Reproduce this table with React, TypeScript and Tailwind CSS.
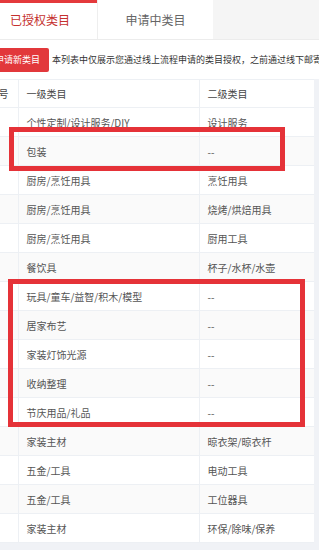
import React from "react";

const rows: [string, string][] = [
  ["个性定制/设计服务/DIY", "设计服务"],
  ["包装", "--"],
  ["厨房/烹饪用具", "烹饪用具"],
  ["厨房/烹饪用具", "烧烤/烘焙用具"],
  ["厨房/烹饪用具", "厨用工具"],
  ["餐饮具", "杯子/水杯/水壶"],
  ["玩具/童车/益智/积木/模型", "--"],
  ["居家布艺", "--"],
  ["家装灯饰光源", "--"],
  ["收纳整理", "--"],
  ["节庆用品/礼品", "--"],
  ["家装主材", "晾衣架/晾衣杆"],
  ["五金/工具", "电动工具"],
  ["五金/工具", "工位器具"],
  ["家装主材", "环保/除味/保养"],
];

export default function App() {
  return (
    <div className="relative w-[319px] h-[550px] overflow-hidden bg-[#f0f2f6] font-['Noto_Sans_CJK_SC','Noto_Sans',sans-serif]">
      {/* tabs */}
      <div className="flex h-[40px] bg-[#f5f5f5] border-b border-[#ececec]">
        <div className="w-[97px] bg-white border-t-[3px] border-[#e4393c] flex items-center pl-[10px] pb-[3px] text-[12px] text-[#c5302e]">
          已授权类目
        </div>
        <div className="w-[116px] bg-white border-l border-[#eeeeee] flex items-center justify-center text-[12px] text-[#666]">
          申请中类目
        </div>
      </div>

      {/* notice */}
      <div className="flex items-center h-[39px] bg-white whitespace-nowrap">
        <button className="-ml-[14px] h-[24px] w-[63px] shrink-0 rounded-[2px] bg-[#e2383b] text-white text-[9px] flex items-center justify-center">
          申请新类目
        </button>
        <span className="ml-[3px] text-[9px] text-[#333]">
          本列表中仅展示您通过线上流程申请的类目授权，之前通过线下邮寄资料授权的类目请联系小二
        </span>
      </div>

      {/* table */}
      <div className="mr-[5px] overflow-hidden bg-white">
        <table className="-ml-[20px] border-collapse table-fixed text-[10px] text-[#555]" style={{ width: 334 }}>
          <colgroup>
            <col className="w-[38px]" />
            <col className="w-[181px]" />
            <col className="w-[115px]" />
          </colgroup>
          <thead>
            <tr className="h-[28px] border-y border-[#edf0f4] text-[#444]">
              <th className="font-normal text-right pr-[9px]">序号</th>
              <th className="font-normal text-left pl-[8px] border-l border-[#edf0f4]">一级类目</th>
              <th className="font-normal text-left pl-[8px] border-l border-[#edf0f4]">二级类目</th>
            </tr>
          </thead>
          <tbody>
            {rows.map((r, i) => (
              <tr key={i} className={`h-[29px] border-b border-[#edf0f4] ${i % 2 === 1 ? "bg-[#fafafa]" : "bg-white"}`}>
                <td className="text-left pl-[3px]">{i + 1}</td>
                <td className="pl-[8px] border-l border-[#edf0f4] whitespace-nowrap">{r[0]}</td>
                <td className="pl-[8px] border-l border-[#edf0f4] whitespace-nowrap">{r[1]}</td>
              </tr>
            ))}
          </tbody>
        </table>
      </div>

      {/* annotation boxes */}
      <div className="absolute left-[9px] top-[127px] w-[276px] h-[44px] border-[5px] border-[#e53238]" />
      <div className="absolute left-[8px] top-[279px] w-[297px] h-[148px] border-[5px] border-[#e53238]" />
    </div>
  );
}
